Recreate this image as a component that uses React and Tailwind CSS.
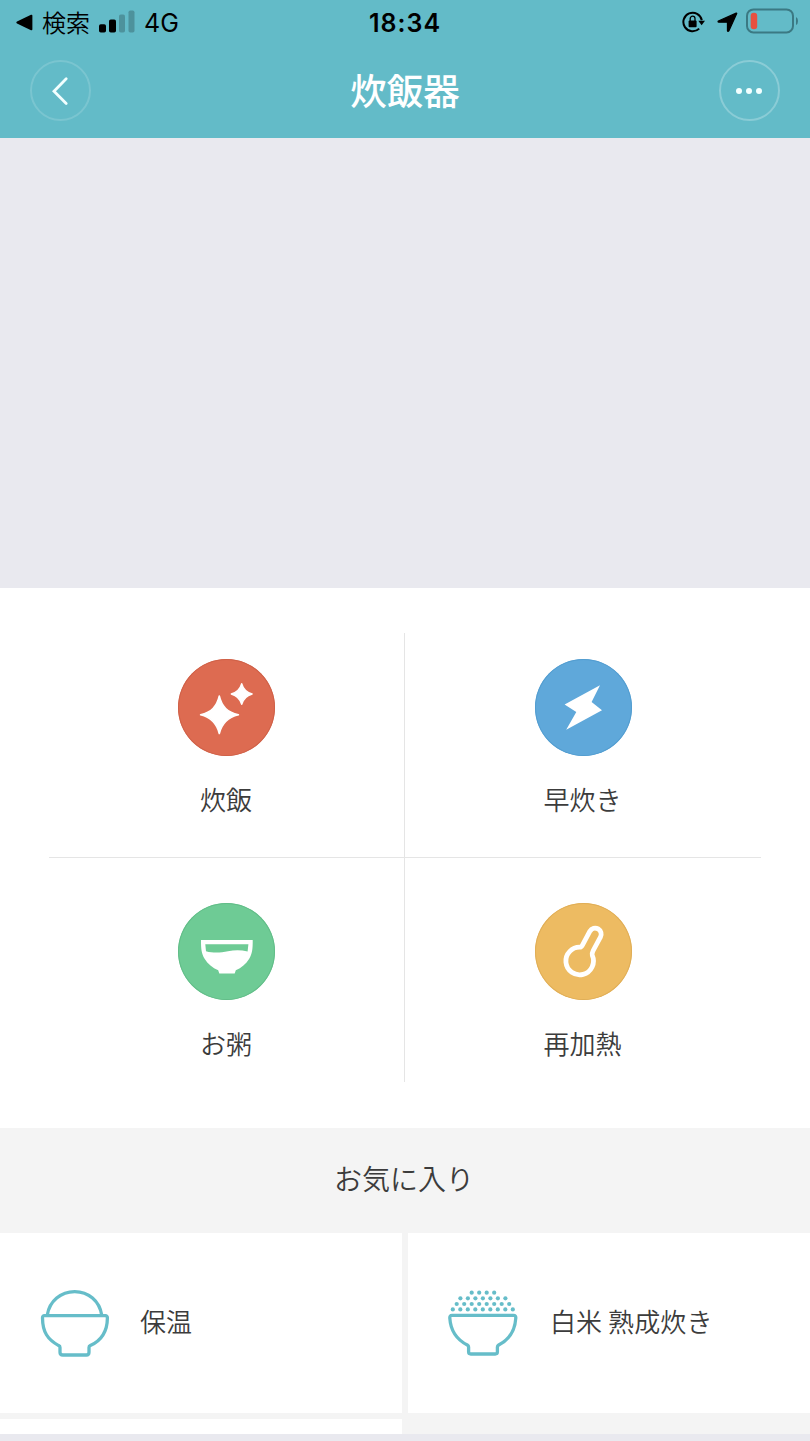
import React from "react";

const SparkleIcon = () => (
  <svg viewBox="0 0 97 97" className="h-full w-full" fill="#fff">
    <path d="M41.3 37C43.8 48 49.5 53 60.4 55.7C49.5 58.4 43.8 64 41.3 74.5C38.8 64 33.2 58.4 22.6 55.7C33.2 53 38.8 48 41.3 37Z" stroke="#fff" strokeWidth="1.6" strokeLinejoin="round" />
    <path d="M63.7 24.7C65.3 30.5 68.2 33.3 74.1 35C68.2 36.7 65.3 39.5 63.7 45.3C62.1 39.5 59.2 36.7 53.3 35C59.2 33.3 62.1 30.5 63.7 24.7Z" stroke="#fff" strokeWidth="1.4" strokeLinejoin="round" />
  </svg>
);

const BoltIcon = () => (
  <svg viewBox="0 0 97 97" className="h-full w-full" fill="#fff">
    <path d="M65 26.2L56.6 43.1L67 51.2L31.2 70.8L41.3 52.9L29.6 45.6Z" />
  </svg>
);

const PorridgeIcon = () => (
  <svg viewBox="0 0 97 97" className="h-full w-full" fill="#fff">
    <path
      fillRule="evenodd"
      d="M23 37H74.7C74.8 46 74.2 51 71.2 55.8C68 61 63.5 65 57.8 67.3L56.7 70.5H41.3L40.2 67.3C34.5 65 29.8 61 26.6 55.8C23.6 51 22.9 46 23 37ZM27.3 41.3L28 48.2C36 50.4 43 49.6 50 48.2C57 46.8 63 46.8 69.6 48.5L70.4 41.3Z"
    />
  </svg>
);

const ReheatIcon = () => (
  <svg viewBox="0 0 97 97" className="h-full w-full" fill="none">
    <path
      d="M45.6 44.2A13.8 13.8 0 1 0 57.3 52.4C56.8 50.6 57.3 49.2 58.2 47.5L65.4 34.2A6 6 0 0 0 54.9 28.2L47.6 41.8Q46.6 43.7 45.6 44.2Z"
      stroke="#fff"
      strokeWidth="4.8"
      strokeLinejoin="round"
    />
  </svg>
);

const KeepWarmIcon = () => (
  <svg viewBox="0 0 70 70" className="size-[70px]" fill="none" stroke="#66bdc9" strokeWidth="3.3" strokeLinejoin="round">
    <path d="M7.3 26C9.5 12 21 2.6 34.7 2.6S59.5 12 61.7 26" />
    <path d="M4.5 26.7H65.3Q67.5 26.7 67.4 29C67.3 43 61.5 51.5 50.3 56.6Q49 57.2 49 58.5V63.2Q49 66 46.4 66H22.8Q20 66 20 63.2V58.5Q20 57.2 18.7 56.6C7.6 50.5 2.6 43 2.5 29Q2.4 26.7 4.5 26.7Z" />
  </svg>
);

const riceRows = [
  { y: 3.7, start: 24.7, count: 4 },
  { y: 9.3, start: 13.4, count: 7 },
  { y: 15, start: 9.7, count: 8 },
  { y: 20.4, start: 5.8, count: 9 },
];

const WhiteRiceIcon = () => (
  <svg viewBox="0 0 72 70" className="h-[70px] w-[72px]" fill="none">
    {riceRows.map((row) =>
      Array.from({ length: row.count }, (_, i) => (
        <circle key={`${row.y}-${i}`} cx={row.start + i * 7.5} cy={row.y} r="2.1" fill="#66bdc9" />
      ))
    )}
    <path
      d="M5 26.3H66.6Q68.9 26.3 68.8 29C68 42 61.5 51 51.7 56Q50.4 56.8 50.4 58V62.8Q50.4 65 48.2 65H23.8Q21.6 65 21.6 62.8V58Q21.6 56.8 20.3 56C9.5 50.5 3.6 42 2.8 29Q2.7 26.3 5 26.3Z"
      stroke="#66bdc9"
      strokeWidth="3.3"
      strokeLinejoin="round"
    />
  </svg>
);

const StatusBar = () => (
  <div className="grid h-[43px] grid-cols-[1fr_auto_1fr] items-center text-black">
    <div className="flex items-center pl-4">
      <svg viewBox="0 0 17 17" className="mt-px size-[17px]">
        <path d="M1 7.6L15 .8Q16.4.4 16.4 1.8V15.2Q16.4 16.6 15 16.2L1 9.4Q-.4 8.5 1 7.6Z" />
      </svg>
      <span className="ml-[9px] text-[24px] leading-none font-[350]">検索</span>
      <svg viewBox="0 0 36 23" className="ml-[9px] h-[23px] w-9">
        <rect x="0" y="14.2" width="7" height="8.3" rx="1.8" />
        <rect x="10" y="9.5" width="7" height="13" rx="1.8" />
        <rect x="20" y="4.5" width="6" height="18" rx="1.8" opacity=".22" />
        <rect x="29.5" y="0.5" width="6" height="22" rx="1.8" opacity=".22" />
      </svg>
      <span className="ml-[9px] pt-[3px] font-[Inter] text-[25px] leading-none">4G</span>
    </div>
    <span className="pt-[3px] font-[Inter] text-[25px] leading-none font-semibold tracking-[1px]">18:34</span>
    <div className="flex items-center justify-end pr-3">
      {/* Rotation lock */}
      <svg viewBox="0 0 23 22" className="mt-px h-[22px] w-[23px]" fill="none">
        <path d="M17.2 17.6A9.3 9.3 0 1 1 19.8 9.2" stroke="#000" strokeWidth="2" />
        <path d="M16.3 9.7H23L19.6 14.2Z" fill="#000" />
        <rect x="6.6" y="9.6" width="8" height="6.6" rx="1" fill="#000" />
        <path d="M8.2 10V7.6A2.4 2.4 0 0 1 13 7.6V10" stroke="#000" strokeWidth="1.3" />
      </svg>
      <svg viewBox="0 0 21 21" className="mt-0.5 ml-3 size-[21px]">
        <path
          d="M19.2 1.2L1.4 9Q.6 9.9 1.8 10.2H9.9Q10.5 10.2 10.5 10.8V18.7Q10.9 19.8 11.8 18.9L19.7 1.6Q19.8 1 19.2 1.2Z"
          stroke="#000"
          strokeWidth="1.3"
          strokeLinejoin="round"
        />
      </svg>
      <svg viewBox="0 0 52 26" className="mb-px ml-2 h-[26px] w-[52px]" fill="none">
        <rect x="1" y="1.4" width="46" height="23" rx="6.5" stroke="#3b7983" strokeWidth="2" />
        <rect x="4.7" y="4.8" width="6.5" height="16.4" rx="3" fill="#e8503f" />
        <path d="M50 9Q52 10 52 13T50 17Z" fill="#3b7983" />
      </svg>
    </div>
  </div>
);

const NavBar = () => (
  <div className="flex h-[95px] items-center justify-between px-[30px]">
    <button className="flex size-[61px] items-center justify-center rounded-full border-2 border-white/15 pr-0.5" aria-label="戻る">
      <svg viewBox="0 0 18 30" className="h-[30px] w-[18px]" fill="none">
        <path d="M15.2 2.8L3 15.2L15.2 27.4" stroke="#f2ffff" strokeWidth="2.8" strokeLinecap="round" />
      </svg>
    </button>
    <h1 className="text-[36.5px] leading-none font-medium text-white">炊飯器</h1>
    <button className="flex size-[61px] items-center justify-center gap-1 rounded-full border-2 border-white/25 pr-px" aria-label="メニュー">
      <span className="size-1.5 rounded-full bg-[#f2ffff]"></span>
      <span className="size-1.5 rounded-full bg-[#f2ffff]"></span>
      <span className="size-1.5 rounded-full bg-[#f2ffff]"></span>
    </button>
  </div>
);

const modes = [
  { label: "炊飯", icon: SparkleIcon, cell: "border-r border-b pt-[26px]", circle: "bg-[#dd6b51] inset-ring-[#cf6148]" },
  { label: "早炊き", icon: BoltIcon, cell: "border-b pt-[26px]", circle: "bg-[#5fa8da] inset-ring-[#539dd0]" },
  { label: "お粥", icon: PorridgeIcon, cell: "border-r pt-[45px]", circle: "bg-[#6ecb95] inset-ring-[#62bd88]" },
  { label: "再加熱", icon: ReheatIcon, cell: "pt-[45px]", circle: "bg-[#edbb62] inset-ring-[#e0ae57]" },
];

const ModeCell = ({ mode }) => {
  const Icon = mode.icon;
  return (
    <div className={`flex flex-col items-center border-[#e5e5e5] ${mode.cell}`}>
      <div className={`size-[97px] rounded-full inset-ring-1 ${mode.circle}`}>
        <Icon />
      </div>
      <span className="mt-[30px] pr-px text-[26px] leading-[26px]">{mode.label}</span>
    </div>
  );
};

const App = () => {
  return (
    <div className="flex h-[1441px] w-[810px] flex-col overflow-hidden bg-[#e9e9ef] font-['Noto_Sans_CJK_JP',sans-serif] text-[#3c3c3c]">
      <header className="bg-[#63bbc8]">
        <StatusBar />
        <NavBar />
      </header>

      <div className="h-[450px]"></div>

      {/* Cooking modes */}
      <section className="h-[540px] bg-white px-[49px] pt-[45px]">
        <div className="grid h-[449px] grid-cols-[356px_356px] grid-rows-[225px_224px] font-[350]">
          {modes.map((mode) => (
            <ModeCell key={mode.label} mode={mode} />
          ))}
        </div>
      </section>

      {/* Favorites */}
      <section className="h-[306px] bg-[#f4f4f4] font-[350]">
        <h2 className="flex h-[105px] items-center justify-center pr-0.5 pb-[5px] text-[28px] leading-none font-[350]">
          お気に入り
        </h2>
        <div className="grid grid-cols-2 gap-1.5">
          <div className="flex h-[180px] items-center bg-white pt-0.5 pl-10">
            <KeepWarmIcon />
            <span className="ml-[30px] pb-1.5 text-[26px] leading-none">保温</span>
          </div>
          <div className="flex h-[180px] items-center bg-white pt-0.5 pl-[39px]">
            <WhiteRiceIcon />
            <span className="ml-[31px] pb-1.5 text-[26px] leading-none tracking-[0.1px]">白米 熟成炊き</span>
          </div>
          <div className="h-[15px] bg-white"></div>
        </div>
      </section>
    </div>
  );
};

export default App;
